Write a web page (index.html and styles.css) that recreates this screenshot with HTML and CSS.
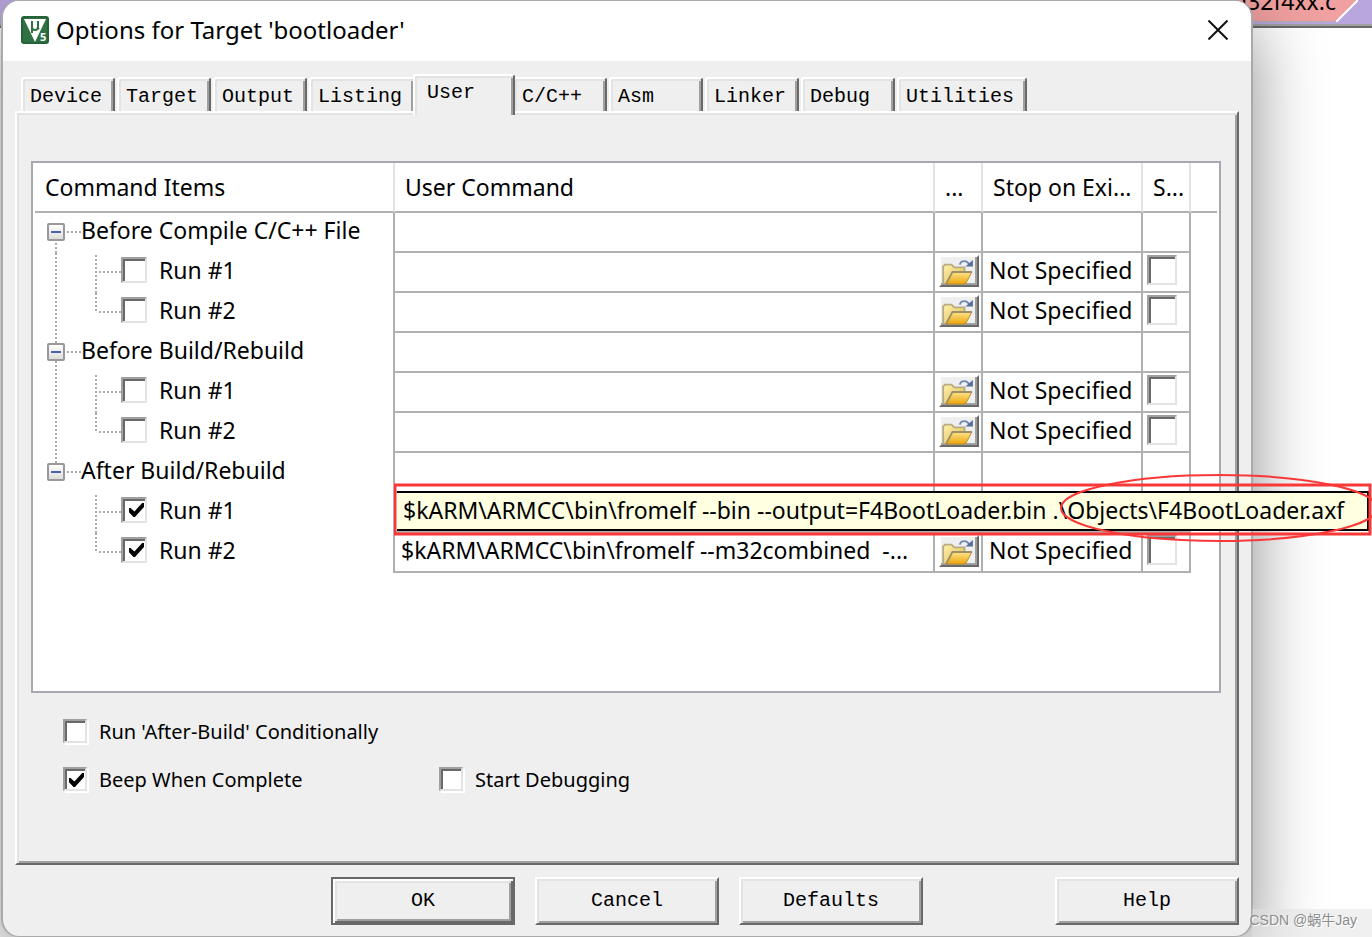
FILE: index.html
```html
<!DOCTYPE html>
<html lang="en">
<head>
  <meta charset="UTF-8" />
  <meta name="viewport" content="width=device-width, initial-scale=1.0"/>
  <title>Options for Target 'bootloader'</title>
  <link rel="stylesheet" href="styles.css">
</head>
<body>

<!-- shared icons -->
<svg class="sprite" aria-hidden="true">
  <defs>
    <linearGradient id="folderBack" x1="0" y1="0" x2="1" y2="1">
      <stop offset="0" stop-color="#fff3b0"/>
      <stop offset="1" stop-color="#e0b84e"/>
    </linearGradient>
    <linearGradient id="folderFront" x1="0" y1="0" x2="0" y2="1">
      <stop offset="0" stop-color="#ffe48a"/>
      <stop offset="1" stop-color="#eba40c"/>
    </linearGradient>
    <symbol id="folder" viewBox="0 0 34 28">
      <path d="M1 27V8l2-2h7l3 3h11v6" fill="url(#folderBack)" stroke="#b5aa80" stroke-width="2"/>
      <path d="M4 27L11 14h21l-7 13z" fill="url(#folderFront)" stroke="#b98a28" stroke-width="1"/>
      <path d="M4 27L11 14h21" fill="none" stroke="#9c9068" stroke-width="2"/>
      <path d="M19 6c1-5 8-5 10 0" fill="none" stroke="#7088b0" stroke-width="2"/>
      <path d="M25 8h8V1z" fill="#55709c"/>
    </symbol>
    <symbol id="line-first" viewBox="0 0 86 40">
      <path d="M21 0v40M61 -2v42M64 19h22" stroke="#ababab" stroke-width="2" stroke-dasharray="2 2"/>
    </symbol>
    <symbol id="line-last" viewBox="0 0 86 40">
      <path d="M21 0v40M61 0v20M64 19h22" stroke="#ababab" stroke-width="2" stroke-dasharray="2 2"/>
    </symbol>
    <symbol id="line-first-end" viewBox="0 0 86 40">
      <path d="M61 -2v42M64 19h22" stroke="#ababab" stroke-width="2" stroke-dasharray="2 2"/>
    </symbol>
    <symbol id="line-last-end" viewBox="0 0 86 40">
      <path d="M61 0v20M64 19h22" stroke="#ababab" stroke-width="2" stroke-dasharray="2 2"/>
    </symbol>
  </defs>
</svg>

<div class="editor">
  <div class="editor-tabs">
    <span class="editor-tab">stm32f4xx.c</span>
    <svg class="tab-slope" viewBox="0 0 22 22"><path d="M0 0h22L0 22z" fill="#f0a0a0"/><path d="M22 0L0 22" stroke="#fff" stroke-width="2"/></svg>
  </div>
</div>

<main class="dialog">
  <header class="titlebar">
    <svg class="app-icon" viewBox="0 0 28 28">
      <rect width="28" height="28" rx="3" fill="#2f7142"/>
      <rect x="1" y="1" width="26" height="26" rx="2" fill="none" stroke="#1f5531"/>
      <path d="M3 3h22L14 26z" fill="#fff"/>
      <path d="M11 5v12M11 11c0 4 6 4 6 0M17 5v7l1 1" fill="none" stroke="#2f7142" stroke-width="2"/>
      <text x="19" y="25" class="app-icon-text">5</text>
    </svg>
    <h1 class="title">Options for Target 'bootloader'</h1>
    <button class="close" aria-label="Close">
      <svg viewBox="0 0 20 20"><path d="M0.500 0.500l19 19M19.500 0.500l-19 19" stroke="#111" stroke-width="2"/></svg>
    </button>
  </header>

  <nav class="tabs">
    <button class="tab">Device</button>
    <button class="tab">Target</button>
    <button class="tab">Output</button>
    <button class="tab">Listing</button>
    <button class="tab active">User</button>
    <button class="tab">C/C++</button>
    <button class="tab">Asm</button>
    <button class="tab">Linker</button>
    <button class="tab">Debug</button>
    <button class="tab">Utilities</button>
  </nav>

  <section class="panel">
    <div class="list">
      <table class="commands">
        <colgroup>
          <col class="col-items"><col><col class="col-small"><col class="col-stop"><col class="col-small"><col class="col-rest">
        </colgroup>
        <thead>
          <tr><th>Command Items</th><th>User Command</th><th>...</th><th>Stop on Exi...</th><th>S...</th><th></th></tr>
        </thead>
        <tbody>
          <tr>
            <td><div class="group"><button class="toggle" aria-label="Collapse"></button><span class="dots"></span>Before Compile C/C++ File</div></td>
            <td></td><td></td><td></td><td></td><td></td>
          </tr>
          <tr>
            <td><label class="item"><svg class="lines"><use href="#line-first"/></svg><input type="checkbox" class="check">Run #1</label></td>
            <td></td>
            <td><button class="browse" aria-label="Browse"><svg><use href="#folder"/></svg></button></td>
            <td>Not Specified</td>
            <td><input type="checkbox" class="check large" aria-label="Spawn"></td><td></td>
          </tr>
          <tr>
            <td><label class="item"><svg class="lines"><use href="#line-last"/></svg><input type="checkbox" class="check">Run #2</label></td>
            <td></td>
            <td><button class="browse" aria-label="Browse"><svg><use href="#folder"/></svg></button></td>
            <td>Not Specified</td>
            <td><input type="checkbox" class="check large" aria-label="Spawn"></td><td></td>
          </tr>
          <tr>
            <td><div class="group"><button class="toggle" aria-label="Collapse"></button><span class="dots"></span>Before Build/Rebuild</div></td>
            <td></td><td></td><td></td><td></td><td></td>
          </tr>
          <tr>
            <td><label class="item"><svg class="lines"><use href="#line-first"/></svg><input type="checkbox" class="check">Run #1</label></td>
            <td></td>
            <td><button class="browse" aria-label="Browse"><svg><use href="#folder"/></svg></button></td>
            <td>Not Specified</td>
            <td><input type="checkbox" class="check large" aria-label="Spawn"></td><td></td>
          </tr>
          <tr>
            <td><label class="item"><svg class="lines"><use href="#line-last"/></svg><input type="checkbox" class="check">Run #2</label></td>
            <td></td>
            <td><button class="browse" aria-label="Browse"><svg><use href="#folder"/></svg></button></td>
            <td>Not Specified</td>
            <td><input type="checkbox" class="check large" aria-label="Spawn"></td><td></td>
          </tr>
          <tr>
            <td><div class="group last"><button class="toggle" aria-label="Collapse"></button><span class="dots"></span>After Build/Rebuild</div></td>
            <td></td><td></td><td></td><td></td><td></td>
          </tr>
          <tr>
            <td><label class="item"><svg class="lines"><use href="#line-first-end"/></svg><input type="checkbox" class="check" checked>Run #1</label></td>
            <td class="tip-cell">
              <div class="tip">$kARM\ARMCC\bin\fromelf --bin --output=F4BootLoader.bin .\Objects\F4BootLoader.axf</div>
              <svg class="marker" viewBox="0 0 984 70">
                <rect x="1" y="11" width="975" height="49" fill="none" stroke="#fb3838" stroke-width="3"/>
                <ellipse cx="825" cy="34" rx="158" ry="33" fill="none" stroke="#fb3838" stroke-width="2"/>
              </svg>
            </td>
            <td></td><td></td><td></td><td></td>
          </tr>
          <tr>
            <td><label class="item"><svg class="lines"><use href="#line-last-end"/></svg><input type="checkbox" class="check" checked>Run #2</label></td>
            <td class="command">$kARM\ARMCC\bin\fromelf --m32combined&nbsp; -...</td>
            <td><button class="browse" aria-label="Browse"><svg><use href="#folder"/></svg></button></td>
            <td>Not Specified</td>
            <td><input type="checkbox" class="check large" aria-label="Spawn"></td><td></td>
          </tr>
        </tbody>
      </table>
    </div>

    <div class="options">
      <label class="option wide"><input type="checkbox" class="check raised">Run 'After-Build' Conditionally</label>
      <label class="option"><input type="checkbox" class="check raised" checked>Beep When Complete</label>
      <label class="option"><input type="checkbox" class="check raised">Start Debugging</label>
    </div>
  </section>

  <footer class="buttons">
    <button class="btn default">OK</button>
    <button class="btn">Cancel</button>
    <button class="btn">Defaults</button>
    <button class="btn help">Help</button>
  </footer>
</main>

<div class="watermark">CSDN @蜗牛Jay</div>

</body>
</html>
```
FILE: styles.css
```css
* {
  box-sizing: border-box;
}
body {
  position: relative;
  min-height: 100vh;
  margin: 0;
  overflow: hidden;
  background: #fff;
  color: #000;
  font-family: 'Noto Sans', 'Open Sans', sans-serif;
  font-size: 23px;
}
button {
  margin: 0;
  padding: 0;
  border: 0;
  background: none;
  color: inherit;
  font-family: 'Liberation Mono', monospace;
  font-size: 20px;
}
.sprite {
  position: absolute;
  width: 0;
  height: 0;
}

/* editor window behind the dialog */
.editor {
  position: absolute;
  inset: 0;
  overflow: hidden;
}
.editor-tabs {
  display: flex;
  justify-content: flex-end;
  height: 28px;
  padding-right: 14px;
  background: #b9a6de;
  border-bottom: 2px solid #696969;
  box-shadow: inset 0 -2px #a0a0a0;
}
.editor-tab {
  height: 22px;
  width: 240px;
  background: #f0a0a0;
  border-bottom: 1px solid #b0b0b0;
  line-height: 2px;
  text-align: right;
}
.tab-slope {
  width: 22px;
  height: 22px;
}

/* dialog */
.dialog {
  position: relative;
  display: flex;
  flex-direction: column;
  min-height: 100vh;
  margin: 0 119px 0 1px;
  border: 2px solid #aaa;
  border-width: 1px 2px;
  border-radius: 18px;
  background: #efefef;
  box-shadow: 0 24px 70px rgba(0, 0, 0, 0.45);
}
.titlebar {
  display: flex;
  align-items: center;
  height: 60px;
  padding: 0 23px 3px 18px;
  border-radius: 16px 16px 0 0;
  background: #fff;
}
.app-icon {
  width: 28px;
  height: 28px;
}
.app-icon-text {
  fill: #fff;
  font: bold 11px 'Open Sans', sans-serif;
}
.title {
  margin: 0 auto 0 7px;
  font-size: 24px;
  font-weight: 400;
}
.close {
  width: 20px;
  height: 20px;
}
.close svg {
  display: block;
  width: 20px;
  height: 20px;
}

/* tabs */
.tabs {
  display: flex;
  align-items: flex-end;
  gap: 2px;
  height: 50px;
  padding-left: 18px;
}
.tab {
  min-width: 94px;
  height: 34px;
  padding: 2px 11px 0 7px;
  border: 2px solid;
  border-color: #fff #696969 transparent #fff;
  border-bottom: 0;
  border-radius: 3px 3px 0 0;
  background: #efefef;
  box-shadow: inset 2px 2px #e3e3e3, inset -2px 0 #a0a0a0;
  text-align: left;
}
.tab.active {
  z-index: 1;
  min-width: 102px;
  height: 41px;
  margin: 0 -4px -4px;
  padding: 0 11px 6px 12px;
}

/* page of the active tab */
.panel {
  display: flex;
  flex: 1;
  flex-direction: column;
  margin: 0 12px;
  padding: 48px 16px 70px 14px;
  border: 2px solid;
  border-color: #fff #696969 #696969 #fff;
  box-shadow: inset 2px 2px #e3e3e3, inset -2px -2px #a0a0a0;
}
.list {
  flex: 1;
  padding: 0 2px;
  border: 2px solid #a8a8b0;
  background: #fff;
}
.commands {
  width: 100%;
  table-layout: fixed;
  border-collapse: separate;
  border-spacing: 0;
}
.col-items {
  width: 360px;
}
.col-small {
  width: 48px;
}
.col-stop {
  width: 160px;
}
.col-rest {
  width: 26px;
}
.commands th {
  height: 50px;
  padding: 0 0 0 10px;
  border-right: 2px solid #e3e3e3;
  border-bottom: 2px solid #b0b0b0;
  font-weight: 400;
  text-align: left;
  white-space: nowrap;
}
.commands td {
  height: 40px;
  padding: 0 0 0 6px;
  border-right: 2px solid #b0b0b0;
  border-bottom: 2px solid #b0b0b0;
  line-height: 34px;
  vertical-align: top;
  white-space: nowrap;
}
.commands td:first-child {
  padding: 0;
  border-bottom: 0;
}
.commands th:last-child {
  border-right: 0;
}
.commands td:last-child {
  border: 0;
}
.commands td:nth-child(3),
.commands td:nth-child(5) {
  padding: 2px 0 0 4px;
}
.group,
.item {
  display: flex;
  height: 40px;
}
.group {
  padding-left: 12px;
  background: repeating-linear-gradient(#ababab 0 2px, transparent 2px 4px) 20px 0 / 2px 40px no-repeat;
}
.commands tr:first-child .group {
  background-position: 20px 30px;
}
.group.last {
  background-size: 2px 10px;
}
.toggle {
  width: 18px;
  height: 18px;
  margin-top: 10px;
  border: 2px solid #999;
  border-radius: 2px;
  background: linear-gradient(#4b63a8, #4b63a8) center / 10px 2px no-repeat, linear-gradient(#fff, #ddd);
}
.dots {
  width: 14px;
  height: 2px;
  margin: 18px 0 0 2px;
  background: repeating-linear-gradient(90deg, #ababab 0 2px, transparent 2px 4px);
}
.lines {
  width: 86px;
  height: 40px;
}

/* check boxes */
.check {
  appearance: none;
  flex: none;
  width: 26px;
  height: 26px;
  margin: 0;
  border: 2px solid;
  border-color: #a0a0a0 #e3e3e3 #e3e3e3 #a0a0a0;
  background: #fff;
  box-shadow: inset 2px 2px #696969;
}
.check:checked::after {
  content: '';
  display: block;
  width: 15px;
  height: 14px;
  margin: 4px 0 0 6px;
  background: #000;
  clip-path: polygon(0 35%, 10% 35%, 36% 60%, 88% 0, 100% 0, 100% 28%, 40% 100%, 30% 100%, 0 66%);
}
.item .check {
  margin: 4px 12px 0 0;
}
.check.large {
  display: block;
  width: 30px;
  height: 30px;
}
.check.raised {
  width: 24px;
  height: 24px;
  margin-right: 12px;
  box-shadow: inset 2px 2px #696969, 2px 2px #fff;
}
.check.raised:checked::after {
  margin: 4px 0 0 4px;
}

.browse {
  display: block;
  width: 40px;
  height: 32px;
  padding: 2px 0 0 1px;
  border: 2px solid;
  border-color: #fff #696969 #696969 #fff;
  background: #efefef;
  box-shadow: inset -2px -2px #a0a0a0;
}
.browse svg {
  display: block;
  width: 32px;
  height: 26px;
}

/* full command shown over the row */
.tip-cell {
  position: relative;
}
.tip {
  position: absolute;
  z-index: 1;
  top: -2px;
  left: 2px;
  width: 972px;
  height: 40px;
  padding-left: 6px;
  border: 2px solid #000;
  border-left: 0;
  background: #ffffe1;
  line-height: 34px;
}
.marker {
  position: absolute;
  z-index: 2;
  top: -19px;
  left: -1px;
  width: 984px;
  height: 70px;
}

.options {
  display: grid;
  grid-template-columns: 376px 1fr;
  row-gap: 24px;
  padding: 26px 0 2px 32px;
}
.option {
  display: flex;
  align-items: center;
  height: 24px;
  font-size: 20px;
}
.option.wide {
  grid-column: 1 / -1;
}

/* bottom buttons */
.buttons {
  display: flex;
  gap: 20px;
  padding: 12px 12px 11px 328px;
}
.btn {
  width: 184px;
  height: 48px;
  padding-bottom: 2px;
  border: 2px solid;
  border-color: #fff #696969 #696969 #fff;
  box-shadow: inset 2px 2px #e3e3e3, inset -2px -2px #a0a0a0;
}
.btn.default {
  border-color: #696969;
  box-shadow: inset 2px 2px #fff, inset -2px -2px #696969, inset 4px 4px #e3e3e3, inset -4px -4px #a0a0a0;
}
.btn.help {
  margin-left: auto;
}

.watermark {
  position: absolute;
  right: 0;
  bottom: 0;
  height: 28px;
  padding-right: 15px;
  background: linear-gradient(90deg, transparent 3px, rgba(225, 225, 225, 0.5) 3px);
  color: #8c8c8c;
  font-family: 'Liberation Sans', 'Noto Sans CJK SC', sans-serif;
  font-size: 14px;
  line-height: 22px;
  text-shadow: 1px 1px #fff;
}
```
